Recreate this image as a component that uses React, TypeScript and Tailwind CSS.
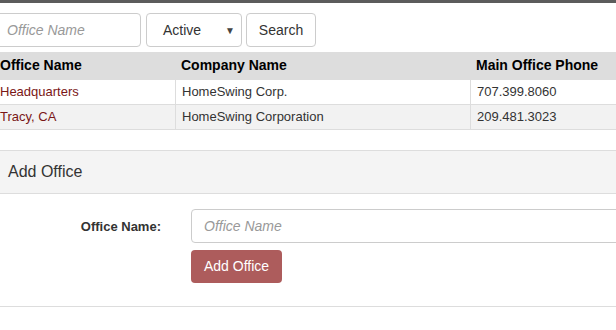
import React from "react";

export default function App() {
  const font = { fontFamily: '"Liberation Sans", Arial, sans-serif' };
  return (
    <div className="w-[616px] h-[330px] overflow-hidden bg-white text-[14px] text-[#333]" style={font}>
      <div className="h-[3px] bg-[#5c5c5c]" />
      <div className="ml-[-6px] w-[700px]">
        <div className="flex items-center pt-[10px] pb-[5px]">
          <input
            placeholder="Office Name"
            className="w-[147px] h-[34px] border border-[#ccc] rounded-[4px] px-[12px] text-[14px] italic placeholder:text-[#999] outline-none"
          />
          <div className="ml-[5px] w-[96px] h-[34px] border border-[#ccc] rounded-[4px] flex items-center pl-[16px] pr-[6px] text-[14px] text-[#333]">
            <span className="flex-1">Active</span>
            <span className="text-[10px] text-[#444]">▼</span>
          </div>
          <button className="ml-[4px] w-[70px] h-[34px] border border-[#ccc] rounded-[4px] bg-white text-[14px] text-[#333]">
            Search
          </button>
        </div>
        <div className="border-b border-[#ddd] text-[13px]">
          <div className="flex h-[27px] bg-[#ddd] items-center font-bold text-black text-[14px]">
            <div className="w-[181px] px-[6px]">Office Name</div>
            <div className="w-[295px] px-[6px]">Company Name</div>
            <div className="flex-1 px-[6px]">Main Office Phone</div>
          </div>
          <div className="flex h-[25px] bg-white border-t border-[#ddd]">
            <div className="w-[181px] px-[6px] flex items-center text-[#7a1616]">Headquarters</div>
            <div className="w-[295px] px-[6px] flex items-center border-l border-[#ddd]">HomeSwing Corp.</div>
            <div className="flex-1 px-[6px] flex items-center border-l border-[#ddd]">707.399.8060</div>
          </div>
          <div className="flex h-[25px] bg-[#f2f2f2] border-t border-[#ddd]">
            <div className="w-[181px] px-[6px] flex items-center text-[#7a1616]">Tracy, CA</div>
            <div className="w-[295px] px-[6px] flex items-center border-l border-[#ddd]">HomeSwing Corporation</div>
            <div className="flex-1 px-[6px] flex items-center border-l border-[#ddd]">209.481.3023</div>
          </div>
        </div>
        <div className="mt-[20px] border-t border-b border-[#ddd]">
          <div className="h-[43px] bg-[#f4f4f4] border-b border-[#ddd] flex items-center px-[14px] text-[16px] text-[#333]">
            Add Office
          </div>
          <div className="pt-[15px] pb-[23px] flex">
            <div className="w-[167px] text-right font-bold pt-[8px] text-[13px] text-[#333]">Office Name:</div>
            <div className="ml-[30px] flex flex-col items-start gap-[7px]">
              <input
                placeholder="Office Name"
                className="w-[480px] h-[34px] border border-[#ccc] rounded-[4px] px-[12px] text-[14px] italic placeholder:text-[#999] outline-none"
              />
              <button className="w-[91px] h-[33px] rounded-[4px] bg-[#ad5c5c] text-white text-[14px]">
                Add Office
              </button>
            </div>
          </div>
        </div>
      </div>
    </div>
  );
}
